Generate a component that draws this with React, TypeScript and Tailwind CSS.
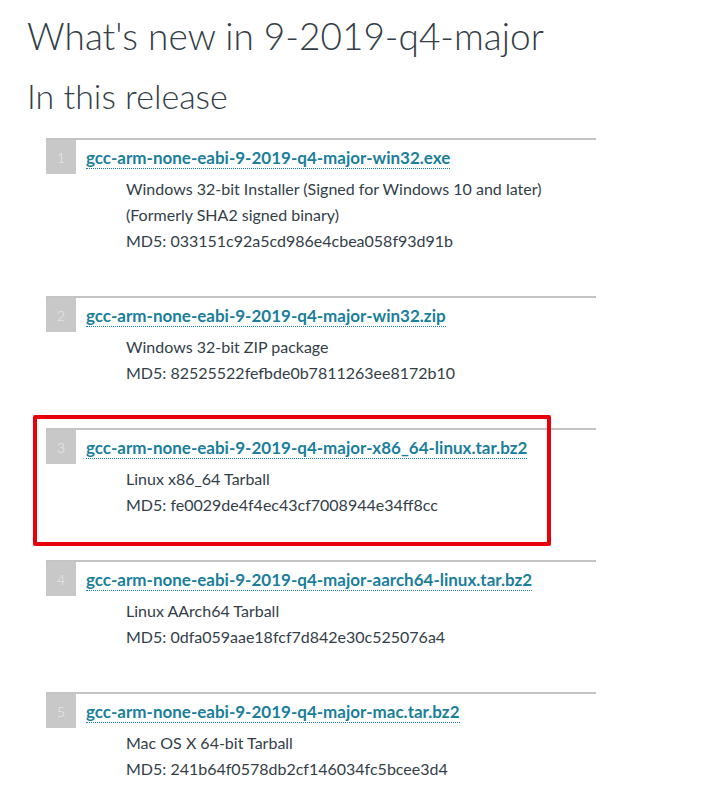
type Release = {
  n: number
  file: string
  lines: string[]
  highlight?: boolean
}

const releases: Release[] = [
  {
    n: 1,
    file: "gcc-arm-none-eabi-9-2019-q4-major-win32.exe",
    lines: [
      "Windows 32-bit Installer (Signed for Windows 10 and later)",
      "(Formerly SHA2 signed binary)",
      "MD5: 033151c92a5cd986e4cbea058f93d91b",
    ],
  },
  {
    n: 2,
    file: "gcc-arm-none-eabi-9-2019-q4-major-win32.zip",
    lines: ["Windows 32-bit ZIP package", "MD5: 82525522fefbde0b7811263ee8172b10"],
  },
  {
    n: 3,
    file: "gcc-arm-none-eabi-9-2019-q4-major-x86_64-linux.tar.bz2",
    lines: ["Linux x86_64 Tarball", "MD5: fe0029de4f4ec43cf7008944e34ff8cc"],
    highlight: true,
  },
  {
    n: 4,
    file: "gcc-arm-none-eabi-9-2019-q4-major-aarch64-linux.tar.bz2",
    lines: ["Linux AArch64 Tarball", "MD5: 0dfa059aae18fcf7d842e30c525076a4"],
  },
  {
    n: 5,
    file: "gcc-arm-none-eabi-9-2019-q4-major-mac.tar.bz2",
    lines: ["Mac OS X 64-bit Tarball", "MD5: 241b64f0578db2cf146034fc5bcee3d4"],
  },
]

const ReleaseItem = ({ item }: { item: Release }) => (
  <li className="relative border-t-2 border-[#c4c4c4] pb-[42px]">
    {/* Annotation box drawn over the row */}
    {item.highlight && (
      <div className="pointer-events-none absolute left-[-13px] top-[-15px] h-[131px] w-[518px] rounded-[2px] border-4 border-[#e8000b]" />
    )}
    <div className="flex items-center">
      <span className="flex h-[34px] w-[30px] shrink-0 items-center justify-center bg-[#c8c8c8] text-[14px] font-light text-[#ececec]">
        {item.n}
      </span>
      <a
        href="#"
        className="mt-[3px] ml-[10px] border-b border-dotted border-[#1b7f9b] text-[17px] leading-[20px] font-bold text-[#1b7f9b]"
      >
        {item.file}
      </a>
    </div>
    <div className="mt-[2px] pl-[80px] text-[16px] leading-[26px] text-[#333e48]">
      {item.lines.map((line) => (
        <p key={line}>{line}</p>
      ))}
    </div>
  </li>
)

export default function App() {
  return (
    <div className="min-h-[808px] bg-white pl-[27px] font-['Lato',sans-serif] text-[#333e48]">
      <h1 className="pt-[14px] text-[37px] leading-[1.2] font-light">
        What's new in 9-2019-q4-major
      </h1>
      <h2 className="mt-[18px] text-[34px] leading-[1.2] font-light">
        In this release
      </h2>
      <ol className="mt-[21px] ml-[19px] w-[550px]">
        {releases.map((r) => (
          <ReleaseItem key={r.n} item={r} />
        ))}
      </ol>
    </div>
  )
}
